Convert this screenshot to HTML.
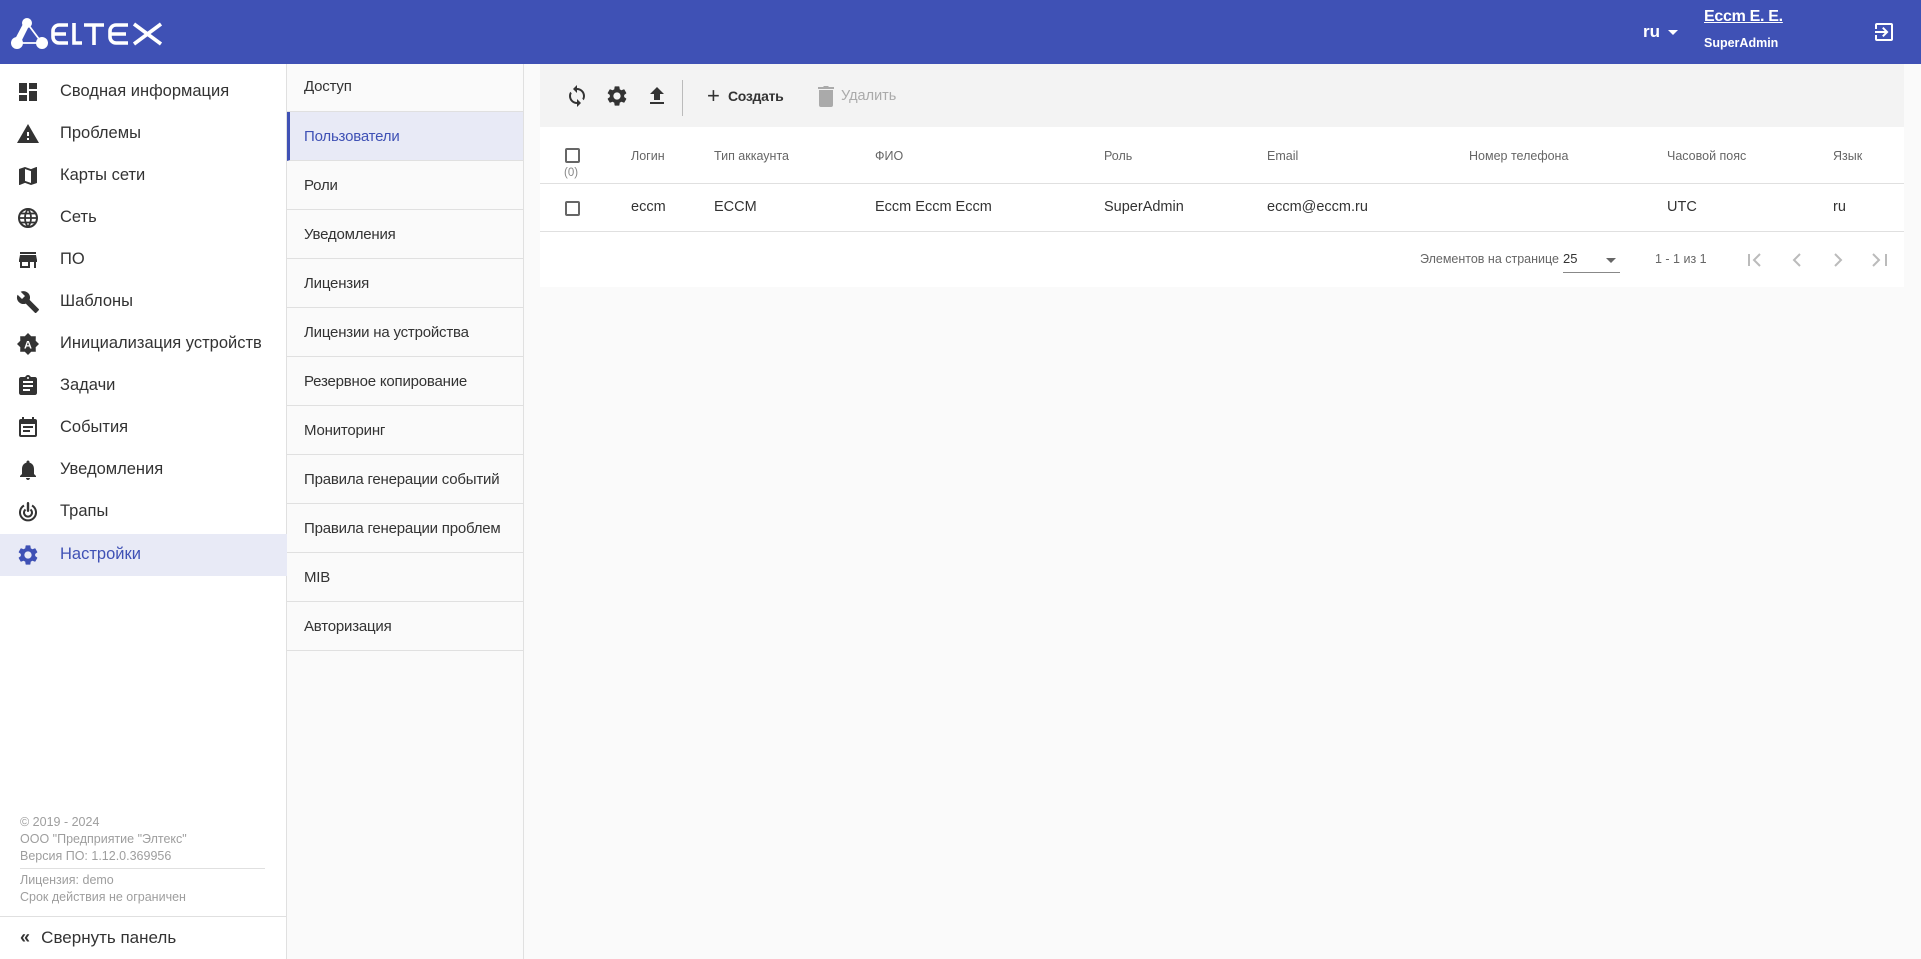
<!DOCTYPE html>
<html><head><meta charset="utf-8"><style>
*{margin:0;padding:0;box-sizing:border-box}
body{width:1921px;height:959px;overflow:hidden;background:#fafafa;font-family:"Liberation Sans","Noto Sans CJK SC",sans-serif;color:#333;position:relative}
.a{position:absolute;white-space:nowrap}
#hdr{position:absolute;left:0;top:0;width:1921px;height:64px;background:#3f51b5}
#side{position:absolute;left:0;top:64px;width:287px;height:895px;background:#fff;border-right:1px solid #e0e0e0}
.si{position:absolute;left:0;width:287px;height:42px;font-size:16.5px;color:#333}
.si span{position:absolute;left:60px;top:11px}
.si svg{position:absolute;left:16px;top:9px}
#sub{position:absolute;left:287px;top:64px;width:237px;height:895px;background:#fafafa;border-right:1px solid #e0e0e0}
.sb{position:absolute;left:0;width:236px;height:49px;border-bottom:1px solid #e0e0e0;font-size:15px;color:#333;letter-spacing:-0.2px}
.sb span{position:absolute;left:17px;top:16px}
.th{position:absolute;top:149px;font-size:12.5px;color:#666}
.td{position:absolute;top:199px;font-size:14.5px;color:#333}
.cb{position:absolute;width:15px;height:15px;border:2px solid #666;border-radius:2px}
</style></head><body>
<div id="hdr">
<svg class="a" style="left:0;top:0" width="180" height="64" viewBox="0 0 180 64">
<g fill="#fff"><circle cx="27" cy="23" r="5"/><circle cx="17" cy="43" r="6"/><circle cx="42" cy="43" r="6"/>
<path d="M24 22 L30 24 L20 44 L14 41 Z"/></g>
<g stroke="#fff" fill="none"><path d="M27 23 L42 43" stroke-width="1.8"/><path d="M17 43 L42 43" stroke-width="1.8"/>
<g stroke-width="3.6"><path d="M68 25 H59 A6 6 0 0 0 53 31 V37 A6 6 0 0 0 59 43 H68 M53 34 H66"/>
<path d="M74 23 V43 H82"/><path d="M84 25 H104 M94 25 V45"/>
<path d="M128 25 H116 A6 6 0 0 0 110 31 V37 A6 6 0 0 0 116 43 H128 M110 34 H126"/>
<path d="M134 24 L161 44 M161 24 L134 44"/></g></g></svg>
<div class="a" style="left:1643px;top:22px;color:#fff;font-size:17px;font-weight:bold">ru</div>
<div class="a" style="left:1668px;top:30px;width:0;height:0;border-left:5px solid transparent;border-right:5px solid transparent;border-top:5px solid #fff"></div>
<div class="a" style="left:1704px;top:8px;color:#fff;font-size:16px;font-weight:bold;text-decoration:underline;letter-spacing:-0.3px">Eccm E. E.</div>
<div class="a" style="left:1704px;top:36px;color:#fff;font-size:12.5px;font-weight:bold">SuperAdmin</div>
<svg class="a" style="left:1872px;top:20px" width="24" height="24" viewBox="0 0 24 24"><path fill="#fff" d="M10.09 15.59L11.5 17l5-5-5-5-1.41 1.41L12.67 11H3v2h9.67l-2.58 2.59zM19 3H5a2 2 0 0 0-2 2v4h2V5h14v14H5v-4H3v4a2 2 0 0 0 2 2h14a2 2 0 0 0 2-2V5a2 2 0 0 0-2-2z"/></svg>
</div>

<div id="side">
<div class="si" style="top:7px"><svg width="24" height="24" viewBox="0 0 24 24"><path fill="#333" d="M3 13h8V3H3v10zm0 8h8v-6H3v6zm10 0h8V11h-8v10zm0-18v6h8V3h-8z"/></svg><span>Сводная информация</span></div>
<div class="si" style="top:49px"><svg width="24" height="24" viewBox="0 0 24 24"><path fill="#333" d="M1 21h22L12 2 1 21zm12-3h-2v-2h2v2zm0-4h-2v-4h2v4z"/></svg><span>Проблемы</span></div>
<div class="si" style="top:91px"><svg width="24" height="24" viewBox="0 0 24 24"><path fill="#333" d="M20.5 3l-.16.03L15 5.1 9 3 3.36 4.9c-.21.07-.36.25-.36.48V20.5c0 .28.22.5.5.5l.16-.03L9 18.9l6 2.1 5.64-1.9c.21-.07.36-.25.36-.48V3.5c0-.28-.22-.5-.5-.5zM15 19l-6-2.11V5l6 2.11V19z"/></svg><span>Карты сети</span></div>
<div class="si" style="top:133px"><svg width="24" height="24" viewBox="0 0 24 24"><circle cx="12" cy="12" r="9" fill="none" stroke="#333" stroke-width="2"/><path d="M3 12h18M12 3c-4 5-4 13 0 18M12 3c4 5 4 13 0 18M5 7.5h14M5 16.5h14" stroke="#333" stroke-width="1.8" fill="none"/></svg><span>Сеть</span></div>
<div class="si" style="top:175px"><svg width="24" height="24" viewBox="0 0 24 24"><path fill="#333" d="M20 4H4v2h16V4zm1 10v-2l-1-5H4l-1 5v2h1v6h10v-6h4v6h2v-6h1zm-9 4H6v-4h6v4z"/></svg><span>ПО</span></div>
<div class="si" style="top:217px"><svg width="24" height="24" viewBox="0 0 24 24"><path fill="#333" d="M22.7 19l-9.1-9.1c.9-2.3.4-5-1.5-6.9-2-2-5-2.4-7.4-1.3L9 6 6 9 1.6 4.7C.4 7.1.9 10.1 2.9 12.1c1.9 1.9 4.6 2.4 6.9 1.5l9.1 9.1c.4.4 1 .4 1.4 0l2.3-2.3c.5-.4.5-1.1.1-1.4z"/></svg><span>Шаблоны</span></div>
<div class="si" style="top:259px"><svg width="24" height="24" viewBox="0 0 24 24"><path fill="#333" d="M12 1l3.2 3.3 4.6-.1-.1 4.6L23 12l-3.3 3.2.1 4.6-4.6-.1L12 23l-3.2-3.3-4.6.1.1-4.6L1 12l3.3-3.2-.1-4.6 4.6.1z"/><text x="12" y="16.5" text-anchor="middle" font-size="11" font-weight="bold" fill="#fff" font-family="Liberation Sans">A</text></svg><span>Инициализация устройств</span></div>
<div class="si" style="top:301px"><svg width="24" height="24" viewBox="0 0 24 24"><path fill="#333" d="M19 3h-4.18C14.4 1.84 13.3 1 12 1s-2.4.84-2.82 2H5c-1.1 0-2 .9-2 2v14c0 1.1.9 2 2 2h14c1.1 0 2-.9 2-2V5c0-1.1-.9-2-2-2zm-7 0c.55 0 1 .45 1 1s-.45 1-1 1-1-.45-1-1 .45-1 1-1zm2 14H7v-2h7v2zm3-4H7v-2h10v2zm0-4H7V7h10v2z"/></svg><span>Задачи</span></div>
<div class="si" style="top:343px"><svg width="24" height="24" viewBox="0 0 24 24"><path fill="#333" d="M17 10H7v2h10v-2zm2-7h-1V1h-2v2H8V1H6v2H5a2 2 0 0 0-2 2v14a2 2 0 0 0 2 2h14a2 2 0 0 0 2-2V5a2 2 0 0 0-2-2zm0 16H5V8h14v11zm-5-5H7v2h7v-2z"/></svg><span>События</span></div>
<div class="si" style="top:385px"><svg width="24" height="24" viewBox="0 0 24 24"><path fill="#333" d="M12 22c1.1 0 2-.9 2-2h-4c0 1.1.89 2 2 2zm6-6v-5c0-3.07-1.64-5.64-4.5-6.32V4c0-.83-.67-1.5-1.5-1.5s-1.5.67-1.5 1.5v.68C7.63 5.36 6 7.92 6 11v5l-2 2v1h16v-1l-2-2z"/></svg><span>Уведомления</span></div>
<div class="si" style="top:427px"><svg width="24" height="24" viewBox="0 0 24 24"><g fill="none" stroke="#333" stroke-width="2"><path d="M8 5.5A8 8 0 1 0 16 5.5"/><path d="M9.5 9.5A4 4 0 1 0 14.5 9.5"/></g><rect x="10.8" y="2" width="2.4" height="10" rx="1.2" fill="#333"/></svg><span>Трапы</span></div>
<div class="si" style="top:470px;background:#e8eaf6;color:#3f51b5"><svg width="24" height="24" viewBox="0 0 24 24"><path fill="#3f51b5" d="M19.14 12.94c.04-.3.06-.61.06-.94 0-.32-.02-.64-.07-.94l2.03-1.58a.49.49 0 0 0 .12-.61l-1.92-3.32a.488.488 0 0 0-.59-.22l-2.39.96c-.5-.38-1.03-.7-1.62-.94l-.36-2.54a.484.484 0 0 0-.48-.41h-3.84c-.24 0-.43.17-.47.41l-.36 2.54c-.59.24-1.13.57-1.62.94l-2.39-.96a.49.49 0 0 0-.59.22L2.74 8.87c-.12.21-.08.47.12.61l2.03 1.58c-.05.3-.09.63-.09.94s.02.64.07.94l-2.03 1.58a.49.49 0 0 0-.12.61l1.92 3.32c.12.22.37.29.59.22l2.39-.96c.5.38 1.03.7 1.62.94l.36 2.54c.05.24.24.41.48.41h3.84c.24 0 .44-.17.47-.41l.36-2.54c.59-.24 1.13-.56 1.62-.94l2.39.96c.22.08.47 0 .59-.22l1.92-3.32c.12-.22.07-.47-.12-.61l-2.01-1.58zM12 15.6c-1.98 0-3.6-1.62-3.6-3.6s1.62-3.6 3.6-3.6 3.6 1.62 3.6 3.6-1.62 3.6-3.6 3.6z"/></svg><span>Настройки</span></div>
<div class="a" style="left:20px;top:750px;font-size:12.5px;line-height:17px;color:#9e9e9e">© 2019 - 2024<br>ООО "Предприятие "Элтекс"<br>Версия ПО: 1.12.0.369956</div>
<div class="a" style="left:20px;top:804px;width:245px;height:1px;background:#e0e0e0"></div>
<div class="a" style="left:20px;top:808px;font-size:12.5px;line-height:17px;color:#9e9e9e">Лицензия: demo<br>Срок действия не ограничен</div>
<div class="a" style="left:0;top:852px;width:286px;height:1px;background:#e0e0e0"></div>
<div class="a" style="left:20px;top:863px;font-size:17px;color:#333"><span style="font-size:18px;font-weight:bold;letter-spacing:-3px">«</span>&nbsp;&nbsp; Свернуть панель</div>
</div>

<div id="sub">
<div class="sb" style="top:0;height:48px"><span style="top:14px">Доступ</span></div>
<div class="sb" style="top:48px;background:#e8eaf6;border-left:3px solid #3f51b5;color:#3f51b5"><span style="left:14px">Пользователи</span></div>
<div class="sb" style="top:97px"><span>Роли</span></div>
<div class="sb" style="top:146px"><span>Уведомления</span></div>
<div class="sb" style="top:195px"><span>Лицензия</span></div>
<div class="sb" style="top:244px"><span>Лицензии на устройства</span></div>
<div class="sb" style="top:293px"><span>Резервное копирование</span></div>
<div class="sb" style="top:342px"><span>Мониторинг</span></div>
<div class="sb" style="top:391px"><span>Правила генерации событий</span></div>
<div class="sb" style="top:440px"><span>Правила генерации проблем</span></div>
<div class="sb" style="top:489px"><span>MIB</span></div>
<div class="sb" style="top:538px"><span>Авторизация</span></div>
</div>

<div class="a" style="left:540px;top:64px;width:1364px;height:63px;background:#f3f3f3"></div>
<div class="a" style="left:540px;top:127px;width:1364px;height:160px;background:#fff"></div>
<svg class="a" style="left:565px;top:84px" width="24" height="24" viewBox="0 0 24 24"><path fill="#333" d="M12 4V1L8 5l4 4V6c3.31 0 6 2.69 6 6 0 1.01-.25 1.97-.7 2.8l1.46 1.46A7.93 7.93 0 0 0 20 12c0-4.42-3.58-8-8-8zm0 14c-3.31 0-6-2.69-6-6 0-1.01.25-1.97.7-2.8L5.24 7.74A7.93 7.93 0 0 0 4 12c0 4.42 3.58 8 8 8v3l4-4-4-4v3z"/></svg>
<svg class="a" style="left:605px;top:84px" width="24" height="24" viewBox="0 0 24 24"><path fill="#333" d="M19.14 12.94c.04-.3.06-.61.06-.94 0-.32-.02-.64-.07-.94l2.03-1.58a.49.49 0 0 0 .12-.61l-1.92-3.32a.488.488 0 0 0-.59-.22l-2.39.96c-.5-.38-1.03-.7-1.62-.94l-.36-2.54a.484.484 0 0 0-.48-.41h-3.84c-.24 0-.43.17-.47.41l-.36 2.54c-.59.24-1.13.57-1.62.94l-2.39-.96a.49.49 0 0 0-.59.22L2.74 8.87c-.12.21-.08.47.12.61l2.03 1.58c-.05.3-.09.63-.09.94s.02.64.07.94l-2.03 1.58a.49.49 0 0 0-.12.61l1.92 3.32c.12.22.37.29.59.22l2.39-.96c.5.38 1.03.7 1.62.94l.36 2.54c.05.24.24.41.48.41h3.84c.24 0 .44-.17.47-.41l.36-2.54c.59-.24 1.13-.56 1.62-.94l2.39.96c.22.08.47 0 .59-.22l1.92-3.32c.12-.22.07-.47-.12-.61l-2.01-1.58zM12 15.6c-1.98 0-3.6-1.62-3.6-3.6s1.62-3.6 3.6-3.6 3.6 1.62 3.6 3.6-1.62 3.6-3.6 3.6z"/></svg>
<svg class="a" style="left:645px;top:84px" width="24" height="24" viewBox="0 0 24 24"><path fill="#333" d="M5 20h14v-2H5v2zm0-10h4v6h6v-6h4l-7-7-7 7z"/></svg>
<div class="a" style="left:682px;top:80px;width:1px;height:36px;background:#bbb"></div>
<div class="a" style="left:707px;top:85px;font-size:22px;color:#333;line-height:22px">+</div>
<div class="a" style="left:728px;top:88px;font-size:14px;font-weight:bold;color:#333;letter-spacing:-0.3px">Создать</div>
<svg class="a" style="left:817px;top:85px" width="18" height="22" viewBox="0 0 18 22"><path fill="#aaa" d="M2 5h14v15a2 2 0 0 1-2 2H4a2 2 0 0 1-2-2zM1 2h5l1-1h4l1 1h5v2H1z"/></svg>
<div class="a" style="left:841px;top:88px;font-size:14.5px;color:#aaa">Удалить</div>

<div class="cb" style="left:565px;top:148px"></div>
<div class="a" style="left:564px;top:167px;font-size:11.5px;color:#888">(0)</div>
<div class="th" style="left:631px">Логин</div>
<div class="th" style="left:714px">Тип аккаунта</div>
<div class="th" style="left:875px">ФИО</div>
<div class="th" style="left:1104px">Роль</div>
<div class="th" style="left:1267px">Email</div>
<div class="th" style="left:1469px">Номер телефона</div>
<div class="th" style="left:1667px">Часовой пояс</div>
<div class="th" style="left:1833px">Язык</div>
<div class="a" style="left:540px;top:183px;width:1364px;height:1px;background:#e0e0e0"></div>
<div class="cb" style="left:565px;top:201px"></div>
<div class="td" style="left:631px">eccm</div>
<div class="td" style="left:714px">ECCM</div>
<div class="td" style="left:875px">Eccm Eccm Eccm</div>
<div class="td" style="left:1104px">SuperAdmin</div>
<div class="td" style="left:1267px">eccm@eccm.ru</div>
<div class="td" style="left:1667px">UTC</div>
<div class="td" style="left:1833px">ru</div>
<div class="a" style="left:540px;top:231px;width:1364px;height:1px;background:#e0e0e0"></div>

<div class="a" style="left:1420px;top:252px;font-size:12.5px;color:#666">Элементов на странице</div>
<div class="a" style="left:1563px;top:251px;font-size:13px;color:#333">25</div>
<div class="a" style="left:1606px;top:258px;width:0;height:0;border-left:5px solid transparent;border-right:5px solid transparent;border-top:5px solid #666"></div>
<div class="a" style="left:1563px;top:272px;width:57px;height:1px;background:#888"></div>
<div class="a" style="left:1655px;top:252px;font-size:12.5px;color:#666">1 - 1 из 1</div>
<svg class="a" style="left:1743px;top:248px" width="150" height="24" viewBox="0 0 150 24"><g fill="none" stroke="#bbb" stroke-width="2"><path d="M6 6v12M17 6l-6 6 6 6M57 6l-6 6 6 6M92 6l6 6-6 6M130 6l6 6-6 6M143 6v12"/></g></svg>
</body></html>
